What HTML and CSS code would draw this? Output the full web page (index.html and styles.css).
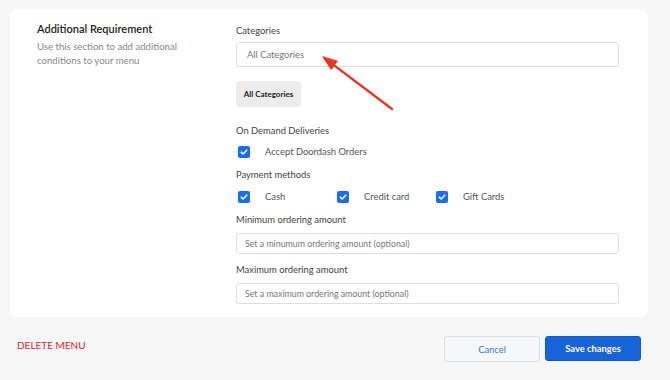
FILE: index.html
```html
<!DOCTYPE html>
<html lang="en">
<head>
    <meta charset="UTF-8">
    <meta name="viewport" content="width=device-width, initial-scale=1.0">
    <title>Menu - Additional Requirement</title>
    <link rel="stylesheet" href="styles.css">
</head>
<body>
    <div class="card">
        <div class="side">
            <h2 class="side-title">Additional Requirement</h2>
            <p class="side-text">Use this section to add additional conditions to your menu</p>
        </div>

        <div class="fields">
            <label class="field-label" for="categories">Categories</label>
            <input type="text" id="categories" class="field-input tall" placeholder="All Categories">

            <button class="chip">All Categories</button>

            <div class="field-label gap-lg">On Demand Deliveries</div>
            <div class="check-row">
                <label class="check"><span class="box"><svg viewBox="0 0 12 12"><path d="M3.3 6.2l1.8 1.8 3.6-3.8" /></svg></span>Accept Doordash Orders</label>
            </div>

            <div class="field-label gap-sm">Payment methods</div>
            <div class="check-row">
                <label class="check"><span class="box"><svg viewBox="0 0 12 12"><path d="M3.3 6.2l1.8 1.8 3.6-3.8" /></svg></span>Cash</label>
                <label class="check"><span class="box"><svg viewBox="0 0 12 12"><path d="M3.3 6.2l1.8 1.8 3.6-3.8" /></svg></span>Credit card</label>
                <label class="check"><span class="box"><svg viewBox="0 0 12 12"><path d="M3.3 6.2l1.8 1.8 3.6-3.8" /></svg></span>Gift Cards</label>
            </div>

            <label class="field-label gap-md" for="minAmount">Minimum ordering amount</label>
            <input type="text" id="minAmount" class="field-input" placeholder="Set a minumum ordering amount (optional)">

            <label class="field-label gap-md" for="maxAmount">Maximum ordering amount</label>
            <input type="text" id="maxAmount" class="field-input" placeholder="Set a maximum ordering amount (optional)">
        </div>

        <!-- annotation arrow pointing at the categories field -->
        <svg class="arrow" width="80" height="64" viewBox="0 0 80 64">
            <path d="M72 57 L14.2 13.4" />
            <path class="head" d="M3 5 L11.2 17.4 L17.2 9.4 Z" />
        </svg>
    </div>

    <div class="footer">
        <button class="delete-btn">DELETE MENU</button>
        <div class="actions">
            <button class="cancel-btn">Cancel</button>
            <button class="save-btn">Save changes</button>
        </div>
    </div>
</body>
</html>
```

FILE: styles.css
```css
body {
    font-family: Lato, 'Noto Sans', sans-serif;
    background-color: #f7f7f7;
    color: #333;
    margin: 0;
}
.card {
    position: relative;
    display: flex;
    margin: 9px 22px 0 10px;
    padding: 15px 29px 13px 27px;
    background-color: #fff;
    border-radius: 8px;
}
.side {
    width: 199px;
}
.side-title {
    margin: -1px 0 0;
    font-size: 11px;
    font-weight: 600;
    line-height: 12px;
    color: #222;
}
.side-text {
    width: 150px;
    margin: 5px 0 0;
    font-size: 9.6px;
    line-height: 14px;
    color: #8a8a8a;
}
.fields {
    flex: 1;
    display: flex;
    flex-direction: column;
    align-items: flex-start;
}
.field-label {
    display: block;
    font-size: 9.4px;
    line-height: 14px;
    color: #444;
}
.gap-sm {
    margin-top: 9px;
}
.gap-md {
    margin-top: 9px;
}
.gap-lg {
    margin-top: 17px;
}
.field-input {
    width: 100%;
    height: 21px;
    margin-top: 6px;
    padding: 0 8px;
    border: 1px solid #dedede;
    border-radius: 3px;
    font-family: inherit;
    font-size: 8.8px;
    color: #333;
    box-sizing: border-box;
}
.field-input.tall {
    height: 25px;
    margin-top: 4px;
    padding: 0 10px;
    font-size: 9.4px;
}
.field-input::placeholder {
    color: #777;
}
.chip {
    margin-top: 14px;
    width: 65px;
    height: 26px;
    padding: 0;
    border: none;
    border-radius: 4px;
    background-color: #ececec;
    font-family: inherit;
    font-size: 8px;
    font-weight: 700;
    color: #222;
}
.check-row {
    display: flex;
    margin-top: 7px;
}
.gap-sm + .check-row {
    margin-top: 8px;
}
.check {
    display: flex;
    align-items: center;
    width: 99px;
    font-size: 9.4px;
    line-height: 14px;
    color: #555;
    white-space: nowrap;
}
.box {
    display: flex;
    width: 12px;
    height: 12px;
    margin: 0 15px 0 2px;
    border-radius: 2px;
    background-color: #1a6cf0;
}
.box svg {
    width: 12px;
    height: 12px;
    fill: none;
    stroke: #fff;
    stroke-width: 1.6;
    stroke-linecap: round;
    stroke-linejoin: round;
}
.arrow {
    position: absolute;
    left: 310px;
    top: 43px;
}
.arrow path {
    fill: none;
    stroke: #ea3323;
    stroke-width: 2.4;
    stroke-linecap: round;
}
.arrow .head {
    fill: #ea3323;
    stroke-width: 1;
    stroke-linejoin: round;
}
.footer {
    display: flex;
    justify-content: space-between;
    align-items: center;
    padding: 19px 29px 0 17px;
}
.delete-btn {
    padding: 0;
    border: none;
    background: none;
    font-family: Lato, sans-serif;
    font-size: 10px;
    color: #e3222f;
    margin-top: -8px;
}
.actions {
    display: flex;
    gap: 5px;
}
.cancel-btn, .save-btn {
    width: 96px;
    height: 26px;
    border-radius: 3px;
    font-family: inherit;
    font-size: 9.4px;
}
.cancel-btn {
    background-color: #f5f7fa;
    border: 1px solid #dcdfe3;
    color: #3a78d8;
}
.save-btn {
    background-color: #1764d8;
    border: 1px solid #1459c4;
    color: #fff;
    font-weight: 700;
    height: 25px;
}
```
